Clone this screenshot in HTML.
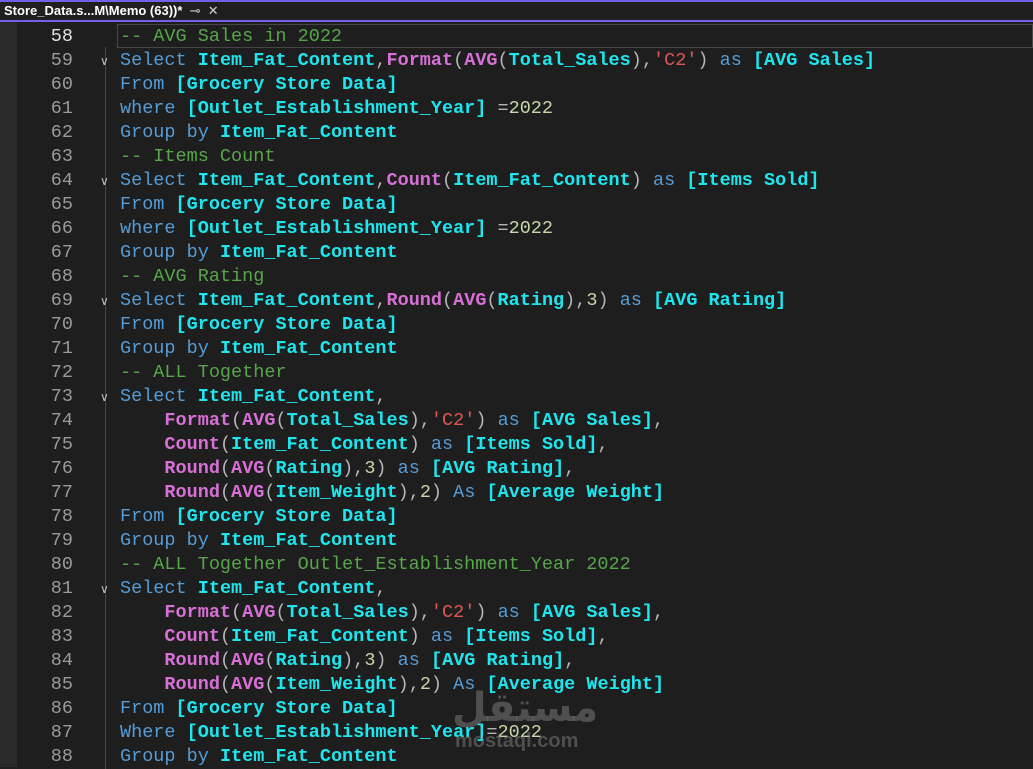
<!DOCTYPE html><html><head><style>
body{margin:0;width:1033px;height:767px;background:#1e1e1e;overflow:hidden;position:relative;font-family:"Liberation Mono",monospace}
.tabbar{position:absolute;left:0;top:0;width:1033px;height:22px;background:#1f1f1f;border-top:2px solid #7160e8;box-sizing:border-box}
.tab{position:absolute;left:0;top:2px;width:214px;height:18px;background:#1f1f1f;color:#fff;font:bold 13px "Liberation Sans",sans-serif;line-height:18px;padding-left:4px;box-sizing:border-box;white-space:nowrap}
.uline{position:absolute;left:0;top:20px;width:1033px;height:2px;background:#7160e8}
.gut{position:absolute;left:0;top:22px;width:17px;height:745px;background:#2a2a2a}
.guide{position:absolute;left:105px;top:47px;width:1px;height:722px;background:#4a4a4a}
.ln{position:absolute;left:20px;width:53px;text-align:right;color:#9a9a9a;font-size:18.5px;line-height:24px}
.code{position:absolute;left:120px;top:25px;font-size:18.5px;line-height:24px;white-space:pre;color:#d4d4d4}
.fold{position:absolute;left:100px;color:#bbb;font-size:12px}
.k{color:#569cd6}.i{color:#1ee6ee;font-weight:bold}.f{color:#d670d6;font-weight:bold}.s{color:#e05555}.n{color:#c8d6a8}.c{color:#57a64a}.p{color:#b4b4b4}
.cur{position:absolute;left:117px;top:24px;width:916px;height:24px;border:1px solid #464646;box-sizing:border-box}
.wm{position:absolute;left:452px;top:688px;color:rgba(140,140,140,.45);font:bold 40px "DejaVu Sans",sans-serif;line-height:40px}
.wm2{position:absolute;left:455px;top:730px;color:rgba(140,140,140,.45);font:bold 20px "Liberation Sans",sans-serif}
</style></head><body>
<div class="tabbar"></div><div class="tab">Store_Data.s...M\Memo (63))* &nbsp;<span style="font-weight:normal;color:#ccc">⊸ &nbsp;✕</span></div><div class="uline"></div>
<div class="gut"></div><div class="guide"></div><div class="cur"></div>
<div class="ln" style="top:25px"><span style="color:#e0e0e0">58</span><br>59<br>60<br>61<br>62<br>63<br>64<br>65<br>66<br>67<br>68<br>69<br>70<br>71<br>72<br>73<br>74<br>75<br>76<br>77<br>78<br>79<br>80<br>81<br>82<br>83<br>84<br>85<br>86<br>87<br>88</div>
<div class="fold" style="top:54px">∨</div><div class="fold" style="top:174px">∨</div><div class="fold" style="top:294px">∨</div><div class="fold" style="top:390px">∨</div><div class="fold" style="top:582px">∨</div>
<div class="code"><span class="c">-- AVG Sales in 2022</span>
<span class="k">Select</span> <span class="i">Item_Fat_Content</span><span class="p">,</span><span class="f">Format</span><span class="p">(</span><span class="f">AVG</span><span class="p">(</span><span class="i">Total_Sales</span><span class="p">),</span><span class="s">'C2'</span><span class="p">)</span> <span class="k">as</span> <span class="i">[AVG Sales]</span>
<span class="k">From</span> <span class="i">[Grocery Store Data]</span>
<span class="k">where</span> <span class="i">[Outlet_Establishment_Year]</span> <span class="p">=</span><span class="n">2022</span>
<span class="k">Group by</span> <span class="i">Item_Fat_Content</span>
<span class="c">-- Items Count</span>
<span class="k">Select</span> <span class="i">Item_Fat_Content</span><span class="p">,</span><span class="f">Count</span><span class="p">(</span><span class="i">Item_Fat_Content</span><span class="p">)</span> <span class="k">as</span> <span class="i">[Items Sold]</span>
<span class="k">From</span> <span class="i">[Grocery Store Data]</span>
<span class="k">where</span> <span class="i">[Outlet_Establishment_Year]</span> <span class="p">=</span><span class="n">2022</span>
<span class="k">Group by</span> <span class="i">Item_Fat_Content</span>
<span class="c">-- AVG Rating</span>
<span class="k">Select</span> <span class="i">Item_Fat_Content</span><span class="p">,</span><span class="f">Round</span><span class="p">(</span><span class="f">AVG</span><span class="p">(</span><span class="i">Rating</span><span class="p">),</span><span class="n">3</span><span class="p">)</span> <span class="k">as</span> <span class="i">[AVG Rating]</span>
<span class="k">From</span> <span class="i">[Grocery Store Data]</span>
<span class="k">Group by</span> <span class="i">Item_Fat_Content</span>
<span class="c">-- ALL Together</span>
<span class="k">Select</span> <span class="i">Item_Fat_Content</span><span class="p">,</span>
    <span class="f">Format</span><span class="p">(</span><span class="f">AVG</span><span class="p">(</span><span class="i">Total_Sales</span><span class="p">),</span><span class="s">'C2'</span><span class="p">)</span> <span class="k">as</span> <span class="i">[AVG Sales]</span><span class="p">,</span>
    <span class="f">Count</span><span class="p">(</span><span class="i">Item_Fat_Content</span><span class="p">)</span> <span class="k">as</span> <span class="i">[Items Sold]</span><span class="p">,</span>
    <span class="f">Round</span><span class="p">(</span><span class="f">AVG</span><span class="p">(</span><span class="i">Rating</span><span class="p">),</span><span class="n">3</span><span class="p">)</span> <span class="k">as</span> <span class="i">[AVG Rating]</span><span class="p">,</span>
    <span class="f">Round</span><span class="p">(</span><span class="f">AVG</span><span class="p">(</span><span class="i">Item_Weight</span><span class="p">),</span><span class="n">2</span><span class="p">)</span> <span class="k">As</span> <span class="i">[Average Weight]</span>
<span class="k">From</span> <span class="i">[Grocery Store Data]</span>
<span class="k">Group by</span> <span class="i">Item_Fat_Content</span>
<span class="c">-- ALL Together Outlet_Establishment_Year 2022</span>
<span class="k">Select</span> <span class="i">Item_Fat_Content</span><span class="p">,</span>
    <span class="f">Format</span><span class="p">(</span><span class="f">AVG</span><span class="p">(</span><span class="i">Total_Sales</span><span class="p">),</span><span class="s">'C2'</span><span class="p">)</span> <span class="k">as</span> <span class="i">[AVG Sales]</span><span class="p">,</span>
    <span class="f">Count</span><span class="p">(</span><span class="i">Item_Fat_Content</span><span class="p">)</span> <span class="k">as</span> <span class="i">[Items Sold]</span><span class="p">,</span>
    <span class="f">Round</span><span class="p">(</span><span class="f">AVG</span><span class="p">(</span><span class="i">Rating</span><span class="p">),</span><span class="n">3</span><span class="p">)</span> <span class="k">as</span> <span class="i">[AVG Rating]</span><span class="p">,</span>
    <span class="f">Round</span><span class="p">(</span><span class="f">AVG</span><span class="p">(</span><span class="i">Item_Weight</span><span class="p">),</span><span class="n">2</span><span class="p">)</span> <span class="k">As</span> <span class="i">[Average Weight]</span>
<span class="k">From</span> <span class="i">[Grocery Store Data]</span>
<span class="k">Where</span> <span class="i">[Outlet_Establishment_Year]</span><span class="p">=</span><span class="n">2022</span>
<span class="k">Group by</span> <span class="i">Item_Fat_Content</span></div>
<div class="wm">مستقل</div>
<div class="wm2">mostaql.com</div>
</body></html>
